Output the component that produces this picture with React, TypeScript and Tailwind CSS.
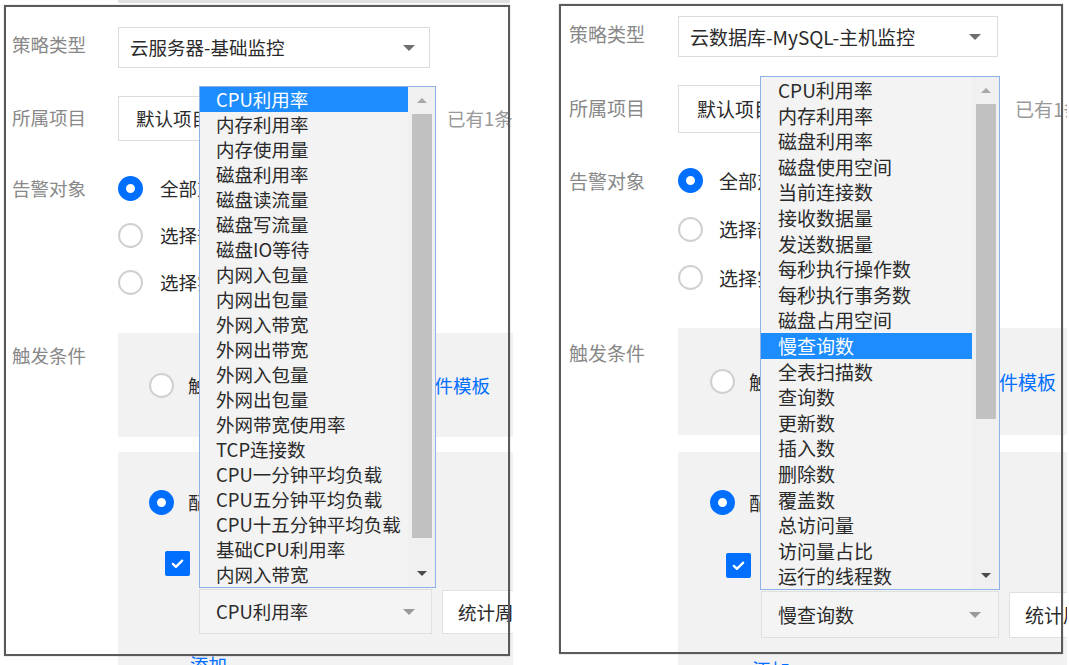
import React from 'react';

const FONT = "font-['Noto_Sans_CJK_SC','Noto_Sans',sans-serif]";

const cvmItems = [
  'CPU利用率', '内存利用率', '内存使用量', '磁盘利用率', '磁盘读流量', '磁盘写流量', '磁盘IO等待',
  '内网入包量', '内网出包量', '外网入带宽', '外网出带宽', '外网入包量', '外网出包量', '外网带宽使用率',
  'TCP连接数', 'CPU一分钟平均负载', 'CPU五分钟平均负载', 'CPU十五分钟平均负载', '基础CPU利用率', '内网入带宽',
];

const mysqlItems = [
  'CPU利用率', '内存利用率', '磁盘利用率', '磁盘使用空间', '当前连接数', '接收数据量', '发送数据量',
  '每秒执行操作数', '每秒执行事务数', '磁盘占用空间', '慢查询数', '全表扫描数', '查询数', '更新数',
  '插入数', '删除数', '覆盖数', '总访问量', '访问量占比', '运行的线程数',
];

function Radio({ on }: { on?: boolean }) {
  return on ? (
    <span className="block h-[25px] w-[25px] shrink-0 rounded-full border-[8px] border-[#006eff] bg-white" />
  ) : (
    <span className="block h-[25px] w-[25px] shrink-0 rounded-full border-2 border-[#d0d0d0] bg-white" />
  );
}

function Caret({ className }: { className: string }) {
  return <span className={`block h-0 w-0 shrink-0 border-x-[6px] border-t-[6px] border-x-transparent ${className}`} />;
}

function Check() {
  return (
    <span className="flex h-[25px] w-[25px] shrink-0 items-center justify-center rounded-[2px] bg-[#006eff]">
      <svg width="15" height="15" viewBox="0 0 16 16">
        <path d="M3 8.4l3.3 3.2L13 4.9" fill="none" stroke="#fff" strokeWidth="2.4" strokeLinecap="round" strokeLinejoin="round" />
      </svg>
    </span>
  );
}

interface DropListProps {
  items: string[];
  active: number;
  box: string;
  row: string;
  listW: string;
  pad: string;
  thumb: string;
}

// the open native <select> list, drawn over the form
function DropList({ items, active, box, row, listW, pad, thumb }: DropListProps) {
  return (
    <div className={`absolute flex border border-[#8fb1e6] bg-[#f3f3f3] ${box}`}>
      <ul className={`shrink-0 ${listW}`}>
        {items.map((t, i) => (
          <li
            key={t}
            className={`${row} ${pad} whitespace-nowrap ${i === active ? 'bg-[#1c8cff] text-white' : 'text-[#2a2a2a]'}`}
          >
            {t}
          </li>
        ))}
      </ul>
      <div className="flex w-[27px] shrink-0 flex-col items-center bg-[#f0f0f0]">
        <div className="flex h-[27px] items-center justify-center">
          <span className="block h-0 w-0 border-x-[5px] border-b-[5px] border-x-transparent border-b-[#a8a8a8]" />
        </div>
        <div className={`w-[20px] bg-[#c1c1c1] ${thumb}`} />
        <div className="flex-1" />
        <div className="flex h-[27px] items-center justify-center">
          <span className="block h-0 w-0 border-x-[5px] border-t-[5px] border-x-transparent border-t-[#4a4a4a]" />
        </div>
      </div>
    </div>
  );
}

function LeftShot() {
  return (
    <div className="relative h-[665px] w-[513px] shrink-0 overflow-hidden text-[18.5px] leading-[25px] text-[#2a2a2a]">
      <div className="ml-[118px] h-[3px] w-[392px] bg-[#e2e2e2]" />
      <div className="pl-[12px]">
        <div className="mt-[24px] flex items-start">
          <span className="mt-[5px] w-[106px] shrink-0 text-[#888]">策略类型</span>
          <div className="flex h-[41px] w-[312px] shrink-0 items-center justify-between border border-[#dcdcdc] bg-white pl-[11px] pr-[14px]">
            <span>云服务器-基础监控</span>
            <Caret className="border-t-[#6f6f6f]" />
          </div>
        </div>

        <div className="mt-[28px] flex items-center">
          <span className="w-[106px] shrink-0 self-start pt-[9px] text-[#888]">所属项目</span>
          <div className="flex h-[45px] w-[300px] shrink-0 items-center border border-[#dcdcdc] pl-[17px]">默认项目</div>
          <span className="ml-[29px] shrink-0 whitespace-nowrap text-[#999]">已有1条</span>
        </div>

        <div className="mt-[35px] flex items-start">
          <span className="w-[106px] shrink-0 text-[#888]">告警对象</span>
          <div className="flex flex-col gap-[22px]">
            {['全部对象', '选择部分对象', '选择实例组'].map((t, i) => (
              <div key={t} className="flex h-[25px] items-center gap-[17px]">
                <Radio on={i === 0} />
                <span className="whitespace-nowrap">{t}</span>
              </div>
            ))}
          </div>
        </div>

        <div className="mt-[38px] flex items-start">
          <span className="mt-[10px] w-[106px] shrink-0 text-[#888]">触发条件</span>
          <div className="w-[395px] shrink-0">
            <div className="flex h-[104px] items-center whitespace-nowrap bg-[#f2f2f2] pl-[31px]">
              <Radio />
              <span className="ml-[14px]">触发条件模板</span>
              <span className="ml-[43px] text-[#006eff]">新建触发条件模板</span>
            </div>
            <div className="mt-[15px] h-[220px] bg-[#f2f2f2] pt-[38px]">
              <div className="flex h-[25px] items-center pl-[31px]">
                <Radio on />
                <span className="ml-[14px]">配置触发条件</span>
              </div>
              <div className="mt-[36px] flex h-[25px] items-center pl-[47px]">
                <Check />
                <span className="ml-[10px]">指标告警</span>
              </div>
              <div className="mt-[13px] flex items-start pl-[81px]">
                <div className="flex h-[45px] w-[233px] shrink-0 items-center justify-between border border-[#e0e0e0] bg-[#f4f4f4] pl-[16px] pr-[16px]">
                  <span>CPU利用率</span>
                  <Caret className="border-t-[#9a9a9a]" />
                </div>
                <div className="ml-[10px] mt-[1px] flex h-[44px] w-[140px] shrink-0 items-center whitespace-nowrap border border-[#e0e0e0] bg-white pl-[15px]">
                  统计周期
                </div>
              </div>
              <div className="mt-[18px] pl-[72px] text-[#006eff]">添加</div>
            </div>
          </div>
        </div>
      </div>

      <DropList
        items={cvmItems}
        active={0}
        box="left-[199px] top-[86px] h-[502px] w-[237px]"
        row="h-[25px] leading-[25px]"
        listW="w-[208px]"
        pad="pl-[16px]"
        thumb="h-[424px]"
      />

      <div className="pointer-events-none absolute left-[4px] top-[5px] h-[651px] w-[506px] border-2 border-[#5a5a5a] shadow-[0_0_1px_rgba(0,0,0,0.4)]" />
    </div>
  );
}

function RightShot() {
  return (
    <div className="relative ml-[42px] h-[665px] w-[512px] shrink-0 overflow-hidden text-[19px] leading-[25.6px] text-[#2a2a2a]">
      <div className="pl-[14px]">
        <div className="mt-[16px] flex items-start">
          <span className="mt-[5px] w-[109px] shrink-0 text-[#888]">策略类型</span>
          <div className="flex h-[41px] w-[320px] shrink-0 items-center justify-between border border-[#dcdcdc] bg-white pl-[11px] pr-[16px]">
            <span>云数据库-MySQL-主机监控</span>
            <Caret className="border-t-[#6f6f6f]" />
          </div>
        </div>

        <div className="mt-[28px] flex items-center">
          <span className="w-[109px] shrink-0 self-start pt-[10px] text-[#888]">所属项目</span>
          <div className="flex h-[48px] w-[300px] shrink-0 items-center border border-[#dcdcdc] pl-[18px]">默认项目</div>
          <span className="ml-[37px] shrink-0 whitespace-nowrap text-[#999]">已有1条</span>
        </div>

        <div className="mt-[35px] flex items-start">
          <span className="w-[109px] shrink-0 text-[#888]">告警对象</span>
          <div className="flex flex-col gap-[23.5px]">
            {['全部对象', '选择部分对象', '选择实例组'].map((t, i) => (
              <div key={t} className="flex h-[25px] items-center gap-[16px]">
                <Radio on={i === 0} />
                <span className="whitespace-nowrap">{t}</span>
              </div>
            ))}
          </div>
        </div>

        <div className="mt-[38px] flex items-start">
          <span className="mt-[12px] w-[109px] shrink-0 text-[#888]">触发条件</span>
          <div className="w-[389px] shrink-0">
            <div className="flex h-[107px] items-center whitespace-nowrap bg-[#f2f2f2] pl-[32px]">
              <Radio />
              <span className="ml-[14px]">触发条件模板</span>
              <span className="ml-[41px] text-[#006eff]">新建触发条件模板</span>
            </div>
            <div className="mt-[17px] h-[220px] bg-[#f2f2f2] pt-[38px]">
              <div className="flex h-[25px] items-center pl-[32px]">
                <Radio on />
                <span className="ml-[14px]">配置触发条件</span>
              </div>
              <div className="mt-[38px] flex h-[25px] items-center pl-[48px]">
                <Check />
                <span className="ml-[10px]">指标告警</span>
              </div>
              <div className="mt-[13px] flex items-start pl-[83px]">
                <div className="flex h-[47px] w-[238px] shrink-0 items-center justify-between border border-[#e0e0e0] bg-[#f4f4f4] pl-[16px] pr-[17px]">
                  <span>慢查询数</span>
                  <Caret className="border-t-[#9a9a9a]" />
                </div>
                <div className="ml-[10px] mt-[1px] flex h-[46px] w-[140px] shrink-0 items-center whitespace-nowrap border border-[#e0e0e0] bg-white pl-[15px]">
                  统计周期
                </div>
              </div>
              <div className="mt-[19px] pl-[74px] text-[#006eff]">添加</div>
            </div>
          </div>
        </div>
      </div>

      <DropList
        items={mysqlItems}
        active={10}
        box="left-[205px] top-[76px] h-[514px] w-[240px]"
        row="h-[25.6px] leading-[25.6px]"
        listW="w-[211px]"
        pad="pl-[17px]"
        thumb="h-[315px]"
      />

      <div className="pointer-events-none absolute left-[4px] top-[4px] h-[650px] w-[504px] border-2 border-[#5a5a5a] shadow-[0_0_1px_rgba(0,0,0,0.4)]" />
    </div>
  );
}

export default function App() {
  return (
    <div className={`flex h-[665px] w-[1069px] overflow-hidden bg-white ${FONT}`}>
      <LeftShot />
      <RightShot />
    </div>
  );
}
